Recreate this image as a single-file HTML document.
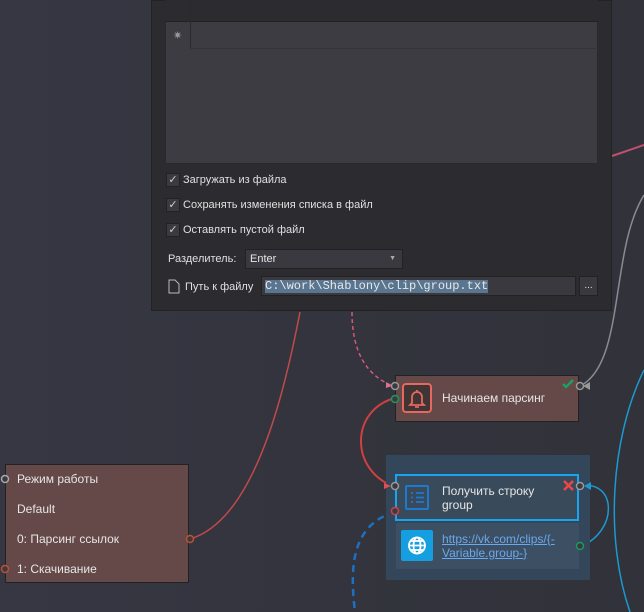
<!DOCTYPE html>
<html><head><meta charset="utf-8"><style>
*{margin:0;padding:0;box-sizing:border-box}
body{width:644px;height:612px;overflow:hidden;background:#34353e;font-family:"Liberation Sans","DejaVu Sans",sans-serif;font-size:12px;color:#dcdcdc;position:relative}
.abs{position:absolute}
.cb{position:absolute;left:166px;width:14px;height:14px;background:#3a3a40;border:1px solid #222;color:#cfcfcf;font-size:11px;line-height:12px;text-align:center}
.lbl{position:absolute;left:183px;font-size:11px;color:#e0e0e0}
.nt{position:absolute;font-size:12px;color:#e6e6e6}
</style></head><body>
<div class="abs" style="left:0;top:0;width:644px;height:612px;background:linear-gradient(90deg,#363743 0%,#33343d 50%,#31323a 100%)"></div>
<svg class="abs" style="left:0;top:0" width="644" height="612">
<path d="M612 156 L644 145" stroke="#c0506e" stroke-width="2" fill="none"/>
<path d="M644 195 C610 250 625 360 582 385" stroke="#8a8a92" stroke-width="1.5" fill="none"/>
<path d="M300 312 C285 390 255 520 190 539" stroke="#c04a4a" stroke-width="1.5" fill="none"/>
<path d="M352 312 C352 350 365 375 393 386" stroke="#d05a7a" stroke-width="1.5" fill="none" stroke-dasharray="4 3"/>
<path d="M395 398 C350 410 350 470 393 486" stroke="#d04040" stroke-width="2" fill="none"/>
<path d="M395 512 C350 525 350 570 355 612" stroke="#1f6fc0" stroke-width="2.5" fill="none" stroke-dasharray="7 5"/>
<path d="M580 547 C620 530 615 480 582 486" stroke="#1a9ad0" stroke-width="1.5" fill="none"/>
<path d="M644 370 C610 440 605 540 630 612" stroke="#1a9ad0" stroke-width="1.5" fill="none"/>
</svg>
<!-- dialog -->
<div class="abs" style="left:151px;top:0;width:461px;height:311px;background:#2b2b30;border:1px solid #222"></div>
<div class="abs" style="left:165px;top:0;width:433px;height:164px;background:#3d3c42;border:1px solid #2a2a2e"></div>
<div class="abs" style="left:165px;top:0;width:433px;height:22px;background:#2b2b30;border-bottom:1px solid #222"></div>
<div class="abs" style="left:190px;top:0;width:1px;height:48px;background:#2a2a2e"></div>
<div class="abs" style="left:190px;top:48px;width:408px;height:1px;background:#35343a"></div>
<div class="abs" style="left:173px;top:29px;color:#999;font-size:11px">✷</div>
<div class="cb" style="top:173px">✓</div><div class="lbl" style="top:174px">Загружать из файла</div>
<div class="cb" style="top:198px">✓</div><div class="lbl" style="top:199px">Сохранять изменения списка в файл</div>
<div class="cb" style="top:223px">✓</div><div class="lbl" style="top:224px">Оставлять пустой файл</div>
<div class="abs" style="left:168px;top:253px;color:#e0e0e0;font-size:11px">Разделитель:</div>
<div class="abs" style="left:245px;top:249px;width:158px;height:20px;background:#3a393f;border:1px solid #222;padding:3px 4px;color:#e6e6e6;font-size:11px">Enter<span style="position:absolute;right:6px;top:5px;font-size:7px;color:#aaa">▼</span></div>
<svg class="abs" style="left:168px;top:279px" width="12" height="15"><path d="M1 1H7L11 5V14H1Z" fill="none" stroke="#bbb"/></svg>
<div class="abs" style="left:185px;top:281px;color:#e0e0e0;font-size:11px">Путь к файлу</div>
<div class="abs" style="left:261px;top:276px;width:315px;height:20px;background:#3a393f;border:1px solid #222"></div>
<div class="abs" style="left:265px;top:280px;background:#5a7590;color:#e8e8e8;font-family:'Liberation Mono',monospace;font-size:12px;line-height:13px">C:\work\Shablony\clip\group.txt</div>
<div class="abs" style="left:579px;top:276px;width:19px;height:20px;background:#3a393f;border:1px solid #222;color:#ddd;text-align:center;font-size:10px;line-height:18px">...</div>
<!-- node1 -->
<div class="abs" style="left:395px;top:375px;width:184px;height:47px;background:#654848;border:1px solid #222"></div>
<div class="abs" style="left:402px;top:383px;width:30px;height:30px;border:2px solid #e8675f;border-radius:4px;background:#3f3535"></div>
<svg class="abs" style="left:402px;top:383px" width="30" height="30"><path d="M10 20V14a5 5 0 0 1 10 0v6l2 2H8Z M15 7v2 M13 24h4" fill="none" stroke="#e8675f" stroke-width="1.8"/></svg>
<div class="nt" style="left:442px;top:391px">Начинаем парсинг</div>
<svg class="abs" style="left:562px;top:379px" width="12" height="10"><path d="M1 5l3 3 7-7" stroke="#1aa060" stroke-width="2.5" fill="none"/></svg>
<!-- group -->
<div class="abs" style="left:386px;top:455px;width:204px;height:125px;background:#34465a"></div>
<div class="abs" style="left:395px;top:474px;width:184px;height:47px;background:#394a5b;border:2px solid #1aa3f0"></div>
<div class="abs" style="left:405px;top:485px;width:24px;height:25px;border:2px solid #1e78d0;border-radius:2px"></div>
<svg class="abs" style="left:405px;top:485px" width="24" height="25"><path d="M6 8h2M11 8h8M6 12.5h2M11 12.5h8M6 17h2M11 17h8" stroke="#1e78d0" stroke-width="1.8"/></svg>
<div class="nt" style="left:442px;top:484px;line-height:14px">Получить строку<br>group</div>
<svg class="abs" style="left:563px;top:480px" width="11" height="11"><path d="M1 1l9 9M10 1l-9 9" stroke="#f04545" stroke-width="2.5"/></svg>
<div class="abs" style="left:396px;top:523px;width:183px;height:46px;background:#3c4f63"></div>
<div class="abs" style="left:401px;top:530px;width:32px;height:31px;background:#169fe0;border-radius:2px"></div>
<svg class="abs" style="left:401px;top:530px" width="32" height="31"><g fill="none" stroke="#fff" stroke-width="1.8"><circle cx="16" cy="15.5" r="8"/><ellipse cx="16" cy="15.5" rx="3.5" ry="8"/><path d="M8 15.5h16M9.5 11h13M9.5 20h13"/></g></svg>
<div class="abs" style="left:442px;top:532px;color:#6aa8f0;text-decoration:underline;font-size:12px;line-height:14px">https://vk.com/clips/{-<br>Variable.group-}</div>
<!-- left node -->
<div class="abs" style="left:5px;top:464px;width:184px;height:119px;background:#654848;border:1px solid #222"></div>
<div class="nt" style="left:17px;top:472px">Режим работы</div>
<div class="nt" style="left:17px;top:502px">Default</div>
<div class="nt" style="left:17px;top:532px">0: Парсинг ссылок</div>
<div class="nt" style="left:17px;top:562px">1: Скачивание</div>
<svg class="abs" style="left:0;top:0" width="644" height="612">
<g stroke-width="1.5" fill="#3a3a40">
<circle cx="5" cy="479" r="3.5" stroke="#aaa"/>
<circle cx="5" cy="569" r="3.5" stroke="#c05030"/>
<circle cx="190" cy="539" r="3.5" stroke="#c05030"/>
<circle cx="395" cy="386" r="3.5" stroke="#999"/>
<circle cx="395" cy="399" r="3.5" stroke="#1a9a60"/>
<circle cx="580" cy="386" r="3.5" stroke="#999"/>
<circle cx="395" cy="486" r="3.5" stroke="#999"/>
<circle cx="395" cy="511" r="3.5" stroke="#d04040"/>
<circle cx="580" cy="486" r="3.5" stroke="#999"/>
<circle cx="580" cy="546" r="3.5" stroke="#1a9a60"/>
</g>
<path d="M386 382l6 4-6 2z" fill="#e07090"/>
<path d="M384 483l7 3-7 3z" fill="#e05050"/>
<path d="M583 386l7-4v8z" fill="#999"/>
<path d="M584 486l7-4v8z" fill="#1a9ad0"/>
</svg>
</body></html>
